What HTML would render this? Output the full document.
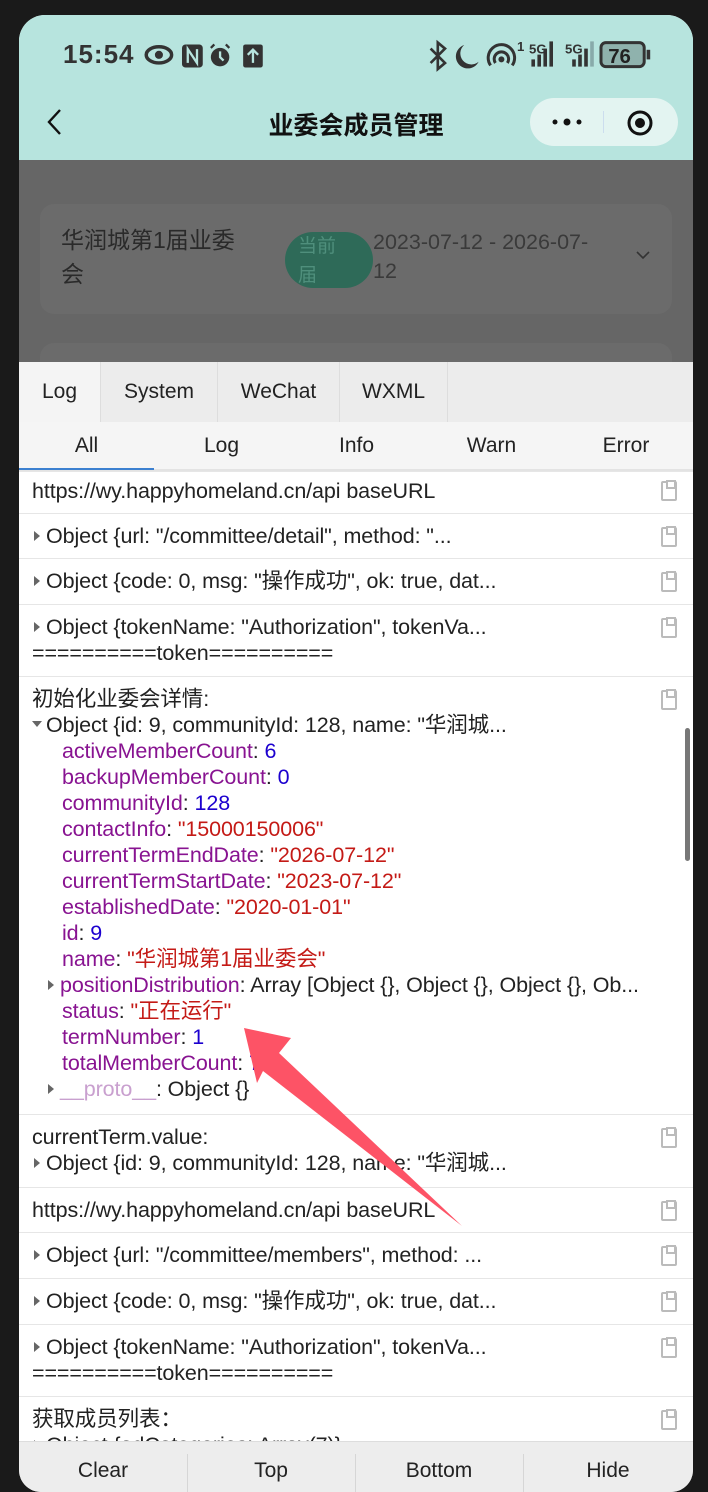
<!DOCTYPE html>
<html><head><meta charset="utf-8"><style>
*{margin:0;padding:0;box-sizing:border-box}
body{width:708px;height:1492px;background:#1a1a1a;position:relative;overflow:hidden;font-family:"Liberation Sans","Noto Sans CJK SC",sans-serif;color:#222}
.scr{position:absolute;left:19px;top:15px;width:674px;height:1477px;overflow:hidden;border-radius:26px 26px 22px 22px;background:#fff}
.hdr{position:absolute;left:0;top:0;width:674px;height:145px;background:#b7e4de}
.ab{position:absolute}
.ov{position:absolute;left:0;top:145px;width:674px;height:202px;background:#666}
.row{position:absolute;left:0;width:674px;border-top:1px solid #e6e6e6;font-size:21.5px;line-height:26px;padding:6px 0 0 13px;white-space:nowrap;background:#fff;letter-spacing:-0.1px}
.row .l{height:26px}
.tri{display:inline-block;width:0;height:0;border-left:6px solid #666;border-top:5px solid transparent;border-bottom:5px solid transparent;margin:0 6px 2px 2px;vertical-align:middle}
.trid{display:inline-block;width:0;height:0;border-top:6px solid #666;border-left:5px solid transparent;border-right:5px solid transparent;margin:0 4px 4px 0;vertical-align:middle}
.k{color:#881391}.n{color:#1c00cf}.s{color:#c41a16}
.cp{position:absolute;right:16px;width:16px;height:20px;border:2px solid #bbb;border-radius:2px}
.cp:after{content:"";position:absolute;left:3px;top:-3px;width:6px;height:5px;border:2px solid #bbb;background:#fff}
</style></head><body>
<div class="scr">
<div class="hdr">
 <div class="ab" style="left:44px;top:24px;font-size:26px;font-weight:bold;color:#333;letter-spacing:1px">15:54</div>
 <svg class="ab" style="left:123px;top:26px" width="125" height="30" viewBox="0 0 105 26"><g transform="translate(0,1)">
  <ellipse cx="13" cy="11" rx="11" ry="7" fill="none" stroke="#333" stroke-width="3"/><circle cx="13" cy="11" r="3.5" fill="#333"/>
  <rect x="33" y="2" width="18" height="20" rx="3" fill="#333"/><path d="M38 18V6l8 12V6" stroke="#b7e4de" stroke-width="2" fill="none"/>
  <circle cx="66" cy="13" r="8" fill="#333"/><path d="M66 8v5l3 3" stroke="#b7e4de" stroke-width="2" fill="none"/><path d="M58 5l3-3M74 5l-3-3" stroke="#333" stroke-width="2"/>
  <rect x="86" y="2" width="17" height="20" rx="2" fill="#333"/><path d="M94.5 18V7M90 11l4.5-4.5L99 11" stroke="#b7e4de" stroke-width="2" fill="none"/></g>
 </svg>
 <svg class="ab" style="left:406px;top:24px" width="232" height="36" viewBox="0 0 192 30">
  <path d="M4 8l12 12-6 5V3l6 5L4 20" stroke="#333" stroke-width="2.2" fill="none"/>
  <path d="M32 5a10 10 0 1 0 12 14a9 9 0 0 1-12-14z" fill="#333"/>
  <path d="M54 22a11 11 0 1 1 18 0M58 20a6 6 0 1 1 10 0" stroke="#333" stroke-width="2.5" fill="none"/><circle cx="63" cy="17" r="2.5" fill="#333"/>
  <text x="76" y="10" font-size="11" font-weight="bold" fill="#333" font-family="Liberation Sans">1</text>
  <text x="86" y="12" font-size="11" font-weight="bold" fill="#333" font-family="Liberation Sans">5G</text>
  <rect x="88" y="17" width="3" height="6" fill="#333"/><rect x="93" y="13" width="3" height="10" fill="#333"/><rect x="98" y="8" width="3" height="15" fill="#333"/><rect x="103" y="2" width="3" height="21" fill="#333"/>
  <text x="116" y="12" font-size="11" font-weight="bold" fill="#333" font-family="Liberation Sans">5G</text>
  <rect x="122" y="17" width="3" height="6" fill="#333"/><rect x="127" y="13" width="3" height="10" fill="#333"/><rect x="132" y="8" width="3" height="15" fill="#333"/><rect x="137" y="2" width="3" height="21" fill="#8aa"/>
  <rect x="146" y="3" width="36" height="20" rx="4" fill="#8fb2ad" stroke="#333" stroke-width="2.5"/>
  <text x="152" y="20" font-size="17" font-weight="bold" fill="#222" font-family="Liberation Sans">76</text>
  <rect x="184" y="9" width="3" height="8" fill="#333"/>
 </svg>
 <svg class="ab" style="left:26px;top:93px" width="20" height="30"><path d="M15 2L4 14l11 12" stroke="#111" stroke-width="2.4" fill="none"/></svg>
 <div class="ab" style="left:0;width:674px;top:91px;text-align:center;font-size:25px;font-weight:bold;color:#111">业委会成员管理</div>
 <div class="ab" style="left:511px;top:83px;width:148px;height:48px;border-radius:24px;background:#e3f4f1">
  <div class="ab" style="left:73px;top:13px;width:1px;height:22px;background:#cde"></div>
  <svg class="ab" style="left:20px;top:17px" width="36" height="14"><circle cx="5" cy="7" r="2.5" fill="#111"/><circle cx="17" cy="7" r="3.5" fill="#111"/><circle cx="29" cy="7" r="2.5" fill="#111"/></svg>
  <svg class="ab" style="left:96px;top:11px" width="28" height="28"><circle cx="14" cy="14" r="11" fill="none" stroke="#111" stroke-width="3"/><circle cx="14" cy="14" r="5" fill="#111"/></svg>
 </div>
</div>
<div class="ov">
 <div class="ab" style="left:21px;top:44px;width:632px;height:110px;border-radius:14px;background:#6b6b6b"></div>
 <div class="ab" style="left:21px;top:183px;width:632px;height:40px;border-radius:14px;background:#6b6b6b"></div>
 <div class="ab" style="left:42px;top:63px;font-size:23px;line-height:34px;color:#2a2a2a;width:200px">华润城第1届业委<br>会</div>
 <div class="ab" style="left:266px;top:72px;width:88px;height:56px;border-radius:28px;background:#2e6a58;color:#4f8f7c;font-size:19px;line-height:29px;padding:0 0 0 13px">当前<br>届</div>
 <div class="ab" style="left:354px;top:68px;font-size:21.5px;line-height:29px;color:#3a3a3a">2023-07-12 - 2026-07-<br>12</div>
 <svg class="ab" style="left:617px;top:90px" width="14" height="10"><path d="M1 2l6 6 6-6" stroke="#333" stroke-width="1.6" fill="none"/></svg>
</div>
<div class="ab" style="left:0;top:347px;width:674px;height:60px;background:#ececec;font-size:21px;color:#222">
 <div class="ab" style="left:0;top:0;width:81px;height:60px;background:#f4f4f4;text-align:center;line-height:60px">Log</div>
 <div class="ab" style="left:81px;top:0;width:117px;height:60px;border-left:1px solid #ddd;text-align:center;line-height:60px">System</div>
 <div class="ab" style="left:198px;top:0;width:122px;height:60px;border-left:1px solid #ddd;text-align:center;line-height:60px">WeChat</div>
 <div class="ab" style="left:320px;top:0;width:109px;height:60px;border-left:1px solid #ddd;border-right:1px solid #ddd;text-align:center;line-height:60px">WXML</div>
</div>
<div class="ab" style="left:0;top:407px;width:674px;height:49px;background:#f5f5f5;font-size:21px;border-bottom:2px solid #e3e3e3">
 <div class="ab" style="left:0;width:135px;text-align:center;line-height:48px">All</div>
 <div class="ab" style="left:135px;width:135px;text-align:center;line-height:48px">Log</div>
 <div class="ab" style="left:270px;width:135px;text-align:center;line-height:48px">Info</div>
 <div class="ab" style="left:405px;width:135px;text-align:center;line-height:48px">Warn</div>
 <div class="ab" style="left:540px;width:134px;text-align:center;line-height:48px">Error</div>
 <div class="ab" style="left:0;top:46px;width:135px;height:2px;background:#3c80d0"></div>
</div>
<div class="row" style="top:456px;height:42px;padding-top:6px">https://wy.happyhomeland.cn/api baseURL<div class="cp" style="top:9px"></div></div>
<div class="row" style="top:498px;height:45px;padding-top:9px"><span class="tri"></span>Object {url: "/committee/detail", method: "...<div class="cp" style="top:13px"></div></div>
<div class="row" style="top:543px;height:46px;padding-top:9px"><span class="tri"></span>Object {code: 0, msg: "操作成功", ok: true, dat...<div class="cp" style="top:13px"></div></div>
<div class="row" style="top:589px;height:72px;padding-top:9px"><div class="l"><span class="tri"></span>Object {tokenName: "Authorization", tokenVa...</div><div class="l">==========token==========</div><div class="cp" style="top:13px"></div></div>
<div class="row" style="top:661px;height:438px;padding-top:9px">
 <div class="l">初始化业委会详情:</div>
 <div class="l"><span class="trid"></span>Object {id: 9, communityId: 128, name: "华润城...</div>
 <div style="padding-left:30px">
 <div class="l"><span class="k">activeMemberCount</span>: <span class="n">6</span></div>
 <div class="l"><span class="k">backupMemberCount</span>: <span class="n">0</span></div>
 <div class="l"><span class="k">communityId</span>: <span class="n">128</span></div>
 <div class="l"><span class="k">contactInfo</span>: <span class="s">"15000150006"</span></div>
 <div class="l"><span class="k">currentTermEndDate</span>: <span class="s">"2026-07-12"</span></div>
 <div class="l"><span class="k">currentTermStartDate</span>: <span class="s">"2023-07-12"</span></div>
 <div class="l"><span class="k">establishedDate</span>: <span class="s">"2020-01-01"</span></div>
 <div class="l"><span class="k">id</span>: <span class="n">9</span></div>
 <div class="l"><span class="k">name</span>: <span class="s">"华润城第1届业委会"</span></div>
 <div class="l" style="margin-left:-14px"><span class="tri" style="margin:0 6px 2px 0"></span><span class="k">positionDistribution</span>: Array [Object {}, Object {}, Object {}, Ob...</div>
 <div class="l"><span class="k">status</span>: <span class="s">"正在运行"</span></div>
 <div class="l"><span class="k">termNumber</span>: <span class="n">1</span></div>
 <div class="l"><span class="k">totalMemberCount</span>: <span class="n">7</span></div>
 <div class="l" style="margin-left:-14px"><span class="tri" style="margin:0 6px 2px 0"></span><span style="color:#c9a0cf">__proto__</span>: Object {}</div>
 </div>
 <div class="cp" style="top:13px"></div>
</div>
<div class="row" style="top:1099px;height:73px;padding-top:9px"><div class="l">currentTerm.value:</div><div class="l"><span class="tri"></span>Object {id: 9, communityId: 128, name: "华润城...</div><div class="cp" style="top:13px"></div></div>
<div class="row" style="top:1172px;height:45px;padding-top:9px">https://wy.happyhomeland.cn/api baseURL<div class="cp" style="top:13px"></div></div>
<div class="row" style="top:1217px;height:46px;padding-top:9px"><span class="tri"></span>Object {url: "/committee/members", method: ...<div class="cp" style="top:13px"></div></div>
<div class="row" style="top:1263px;height:46px;padding-top:9px"><span class="tri"></span>Object {code: 0, msg: "操作成功", ok: true, dat...<div class="cp" style="top:13px"></div></div>
<div class="row" style="top:1309px;height:72px;padding-top:9px"><div class="l"><span class="tri"></span>Object {tokenName: "Authorization", tokenVa...</div><div class="l">==========token==========</div><div class="cp" style="top:13px"></div></div>
<div class="row" style="top:1381px;height:60px;padding-top:9px"><div class="l">获取成员列表：</div><div class="l"><span class="tri"></span>Object {adCategories: Array(7)}</div><div class="cp" style="top:13px"></div></div>
<div class="ab" style="left:666px;top:713px;width:5px;height:133px;border-radius:3px;background:#777"></div>
<div class="ab" style="left:0;top:1426px;width:674px;height:51px;background:#ededed;font-size:21px;border-top:1px solid #ddd">
 <div class="ab" style="left:0;width:168px;text-align:center;line-height:58px">Clear</div>
 <div class="ab" style="left:168px;top:12px;width:1px;height:39px;background:#d6d6d6"></div>
 <div class="ab" style="left:168px;width:168px;text-align:center;line-height:58px">Top</div>
 <div class="ab" style="left:336px;top:12px;width:1px;height:39px;background:#d6d6d6"></div>
 <div class="ab" style="left:336px;width:168px;text-align:center;line-height:58px">Bottom</div>
 <div class="ab" style="left:504px;top:12px;width:1px;height:39px;background:#d6d6d6"></div>
 <div class="ab" style="left:504px;width:170px;text-align:center;line-height:58px">Hide</div>
</div>
</div>
<svg class="ab" style="left:0;top:0" width="708" height="1492"><polygon points="244,1028 291,1038 279,1053 462,1226 263,1071 257,1083" fill="#fd5366"/></svg>
</body></html>
